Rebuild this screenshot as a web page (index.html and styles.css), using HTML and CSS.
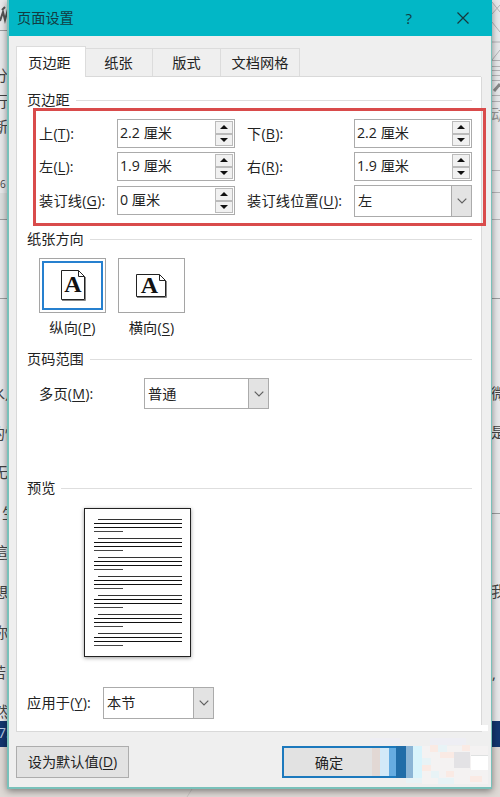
FILE: index.html
```html
<!DOCTYPE html>
<html lang="zh-CN">
<head>
<meta charset="utf-8">
<title>页面设置</title>
<link rel="stylesheet" href="styles.css">
</head>
<body>
<div class="desktop">
  <svg class="backdrop" width="500" height="797" viewBox="0 0 500 797" aria-hidden="true">
    <rect width="500" height="797" fill="#e8e9eb"/>
    <path d="M0 30.5H8M0 219.5H8M0 298.5H8M492 298.5H500M492 513.5H500" stroke="#9a9c9e"/>
    <rect y="193" width="8" height="26" fill="#dcdfdf"/>
    <path d="M0 21L3 12L5 20L8 9M2 10L5 7" stroke="#555" stroke-width="2" fill="none"/>
    <path d="M492 2L500 12M492 14L500 5M492 22L500 32M492 42H500M492 60L500 50M492 60.5H500M492 66.5H500M492 70.5H500M492 75.5H500M492 80.5H500M492 95.5H500M492 101.5H500M492 170.5H500M492 192.5H500M492 219.5H500" stroke="#b5b4b7" fill="none"/>
    <path d="M494 91L500 84" stroke="#888" stroke-width="3"/>
    <g class="doc-text">
      <text x="-7" y="81">分</text><text x="-7" y="107">行</text><text x="-7" y="132">新</text>
      <text class="small" x="0" y="188">6</text>
      <text x="-10" y="399">水</text><text x="5" y="399">月</text><text x="-10" y="439">的</text><text x="5" y="439">情</text><text x="-7" y="478">无</text><text x="2" y="519">生</text><text x="-7" y="558">這</text><text x="-7" y="598">想</text><text x="-7" y="638">你</text><text x="-9" y="678">若</text><text x="-7" y="717">然</text>
      <text class="faint" x="491" y="120">动</text><text x="491" y="399">微</text><text x="491" y="438">是</text><text x="491" y="597">我</text><text x="492" y="679">,</text>
    </g>
    <rect y="721" width="500" height="26" fill="#12366f"/>
    <rect y="747" width="500" height="50" fill="#ded9d5"/>
    <text class="status" x="-2" y="738">75</text>
    <path d="M192 789L187 797" stroke="#c9c5c2"/>
  </svg>

  <main class="dialog">
    <header class="titlebar">
      <h1>页面设置</h1>
      <span class="help">?</span>
      <svg width="12" height="12" viewBox="0 0 12 12"><path d="M.5 .5L11.5 11.5M11.5 .5L.5 11.5" stroke="#17383d" stroke-width="1.2"/></svg>
    </header>

    <nav class="tabs">
      <div class="tab active">页边距</div><div class="tab">纸张</div><div class="tab">版式</div><div class="tab wide">文档网格</div>
    </nav>

    <section class="panel">
      <h2>页边距</h2>
      <div class="margins">
        <label>上(<u>T</u>):</label>
        <div class="spin"><span>2.2 厘米</span><div class="arrows"><i></i><i class="down"></i></div></div>
        <label>下(<u>B</u>):</label>
        <div class="spin"><span>2.2 厘米</span><div class="arrows"><i></i><i class="down"></i></div></div>
        <label>左(<u>L</u>):</label>
        <div class="spin"><span>1.9 厘米</span><div class="arrows"><i></i><i class="down"></i></div></div>
        <label>右(<u>R</u>):</label>
        <div class="spin"><span>1.9 厘米</span><div class="arrows"><i></i><i class="down"></i></div></div>
        <label>装订线(<u>G</u>):</label>
        <div class="spin"><span>0 厘米</span><div class="arrows"><i></i><i class="down"></i></div></div>
        <label>装订线位置(<u>U</u>):</label>
        <div class="select"><span>左</span><b><svg width="10" height="6" viewBox="0 0 10 6"><path d="M.7 .7L5 5L9.3 .7"/></svg></b></div>
      </div>
      <div class="highlight"></div>

      <h2>纸张方向</h2>
      <div class="orientation">
        <div class="choice">
          <div class="tile selected"><svg width="26" height="31" viewBox="0 0 26 31"><path class="sheet" d="M1.5 .5H18.5L24.5 6.5V29.5H1.5Z"/><path class="fold" d="M18.5 .5V6.5H24.5"/><path class="edge" d="M2 30.5H25.5V7"/><text x="13" y="22">A</text></svg></div>
          <span>纵向(<u>P</u>)</span>
        </div>
        <div class="choice">
          <div class="tile"><svg width="31" height="25" viewBox="0 0 31 25"><path class="sheet" d="M.5 1.5H23.5L29.5 7.5V23.5H.5Z"/><path class="fold" d="M23.5 1.5V7.5H29.5"/><path class="edge" d="M1 24.5H30.5V8"/><text x="13.5" y="19.5">A</text></svg></div>
          <span>横向(<u>S</u>)</span>
        </div>
      </div>

      <h2>页码范围</h2>
      <div class="row pages">
        <label>多页(<u>M</u>):</label>
        <div class="select"><span>普通</span><b><svg width="10" height="6" viewBox="0 0 10 6"><path d="M.7 .7L5 5L9.3 .7"/></svg></b></div>
      </div>

      <h2>预览</h2>
      <div class="preview">
        <div class="para"></div><div class="para"></div><div class="para"></div><div class="para"></div><div class="para"></div><div class="para"></div><div class="para"></div>
      </div>

      <div class="row apply">
        <label>应用于(<u>Y</u>):</label>
        <div class="select"><span>本节</span><b><svg width="10" height="6" viewBox="0 0 10 6"><path d="M.7 .7L5 5L9.3 .7"/></svg></b></div>
      </div>
    </section>

    <footer class="actions">
      <div class="button">设为默认值(<u>D</u>)</div>
      <div class="button primary">确定</div>
    </footer>
    <svg class="mosaic" width="120" height="64" viewBox="370 725 120 64" shape-rendering="crispEdges" aria-hidden="true">
      <path fill="#fff" d="M481 725h7v6h-7z"/>
      <path fill="#eeeef4" d="M370 738h30v7h-30zM430 738h36v7h-36z"/>
      <path fill="#e2d8d4" d="M372 748h8v28h-8z"/>
      <path fill="#d3e9f8" d="M380 748h9v28h-9z"/>
      <path fill="#66ace1" d="M389 748h7v28h-7z"/>
      <path fill="#216da8" d="M396 746h10v32h-10z"/>
      <path fill="#8bb5d6" d="M406 746h7v32h-7z"/>
      <path fill="#d9f4fc" d="M413 746h9v32h-9z"/>
      <path fill="#f4f2f2" d="M422 746h66v38h-66z"/>
      <path fill="#faeae4" d="M430 745h8v7h-8zM440 752h14v6h-14zM422 765h9v6h-9zM446 771h8v6h-8zM462 745h8v6h-8zM470 776h12v6h-12z"/>
      <path fill="#e8f3f6" d="M438 745h9v7h-9zM422 758h9v7h-9zM454 758h8v6h-8zM431 771h8v7h-8zM406 778h16v5h-16zM438 778h16v6h-16z"/>
      <path fill="#e3e2e5" d="M454 752h16v16h-16z"/>
      <path fill="#fff" d="M471 756h17v14h-17z"/>
      <path fill="#dfe1e1" d="M471 755h17v1h-17z"/>
    </svg>
  </main>
</div>
</body>
</html>
```
FILE: styles.css
```css
* { box-sizing: border-box; }
body { margin: 0; font: 14.2px/20px "Open Sans", "Noto Sans CJK SC", sans-serif; color: #222; }
h1, h2 { margin: 0; font-size: inherit; font-weight: 400; }
u { text-underline-offset: 2px; text-decoration-thickness: 1px; }
label { letter-spacing: .2px; }
.desktop { position: relative; width: 500px; height: 797px; overflow: hidden; padding: 0 8px 0 7px; }
.backdrop { position: absolute; left: 0; top: 0; }
.doc-text { font-size: 15px; fill: #444; }
.doc-text .small { font-size: 10px; }
.doc-text .faint { fill: #999; }
.status { font-size: 14px; fill: #b9cbe6; }

.dialog { position: relative; height: 789px; background: #efefef; border: solid #79c1ba; border-width: 0 1px 2px 2px; box-shadow: 0 2px 7px rgba(0, 0, 0, .45); }
.titlebar { display: flex; align-items: center; height: 36px; margin-right: -1px; padding: 0 23px 0 8px; background: #02b7c6; color: #123c42; }
.titlebar h1 { flex: 1; }
.help { margin-right: 45px; font-size: 15px; }

.tabs { display: flex; align-items: flex-end; height: 41px; padding-left: 7px; }
.tab { width: 68px; height: 29px; border: 1px solid #dcdcdc; border-width: 1px 1px 0 0; padding-right: 1px; text-align: center; line-height: 28px; }
.tab:nth-child(2) { width: 67px; }
.tab:nth-child(3) { padding-right: 0; }
.tab.wide { width: 79px; padding-right: 0; }
.tab.active { width: 70px; height: 31px; border-left-width: 1px; background: #fff; line-height: 31px; padding-right: 3px; }

.panel { position: relative; height: 655px; margin: 0 9px 0 7px; padding: 13px 9px 0 10px; background: #fff; border: solid #d9d9d9; border-width: 0 1px 1px; }
.panel::before { content: ""; position: absolute; top: -1px; left: 69px; right: 0; height: 1px; background: #d9d9d9; }
h2 { display: flex; align-items: center; gap: 6px; height: 20px; }
h2::after { content: ""; flex: 1; height: 1px; background: #dedede; }

.margins { display: grid; grid-template-columns: 78px 130px 107px 118px; grid-template-rows: 33px 34px 32px; height: 99px; margin: 9px 0 11px 12px; }
.margins label { line-height: 29px; white-space: nowrap; }
.spin, .select { display: flex; width: 118px; border: 1px solid #ababab; background: #fff; }
.spin { height: 29px; padding: 1px 0 1px 1px; }
.spin span { flex: 1; padding-left: 1px; line-height: 23px; }
.arrows { display: grid; grid-template-rows: 1fr 1fr; width: 19px; padding-right: 1px; }
.arrows i { display: flex; align-items: center; justify-content: center; border: 1px solid #bbb; background: #f1f1f1; }
.arrows i::before { content: ""; border: solid transparent; border-width: 0 4px 4px; border-bottom-color: #111; }
.arrows .down::before { border-width: 4px 4px 0; border-top-color: #111; }
.select { height: 32px; line-height: 29px; }
.margins .select { margin-top: -1px; }
.select span { flex: 1; padding-left: 3px; }
.select b { display: flex; align-items: center; justify-content: center; width: 20px; border-left: 1px solid #ababab; background: #e3e3e3; }
.select path { fill: none; stroke: #606060; stroke-width: 1.2; }
.highlight { position: absolute; left: 16px; top: 31px; width: 453px; height: 118px; border: 3px solid #d94b4b; }

.orientation { display: flex; gap: 12px; height: 80px; margin: 9px 0 11px 12px; }
.choice { width: 67px; text-align: center; }
.choice span { letter-spacing: .2px; }
.tile { display: flex; align-items: center; justify-content: center; height: 55px; margin-bottom: 5px; border: 1px solid #a5a5a5; }
.tile.selected { box-shadow: inset 0 0 0 2px #fff, inset 0 0 0 4px #2680cf; }
.sheet { fill: #fff; stroke: #222; }
.fold { fill: none; stroke: #222; }
.edge { fill: none; stroke: #888; }
.tile text { font: bold 24px "Liberation Serif", serif; text-anchor: middle; fill: #111; }

.row { display: flex; align-items: center; height: 32px; }
.pages { height: 31px; margin: 9px 0 69px 12px; }
.pages label { width: 105px; }
.pages .select { width: 125px; height: 31px; }
.preview { width: 107px; height: 149px; margin: 10px 0 0 57px; padding: 10px 8px 0 9px; border: 1px solid #222; box-shadow: 0 1px 4px rgba(0, 0, 0, .4); }
.para { height: 19px; background: linear-gradient(#333, #333) 4px 0 / 84px 1px, linear-gradient(#111, #111) 0 4px / 88px 1px, linear-gradient(#111, #111) 0 8px / 88px 1px, linear-gradient(#444, #444) 0 12px / 29px 1px; background-repeat: no-repeat; }
.apply { margin-top: 30px; }
.apply label { width: 76px; white-space: nowrap; }
.apply .select { width: 111px; }

.actions { display: flex; justify-content: space-between; padding: 14px 81px 0 7px; }
.button { width: 113px; height: 32px; border: 1px solid #adadad; background: #e2e2e2; line-height: 29px; text-align: center; }
.button.primary { width: 128px; border: 2px solid #1c79bd; padding-right: 34px; }
.mosaic { position: absolute; left: 361px; top: 725px; }
```
